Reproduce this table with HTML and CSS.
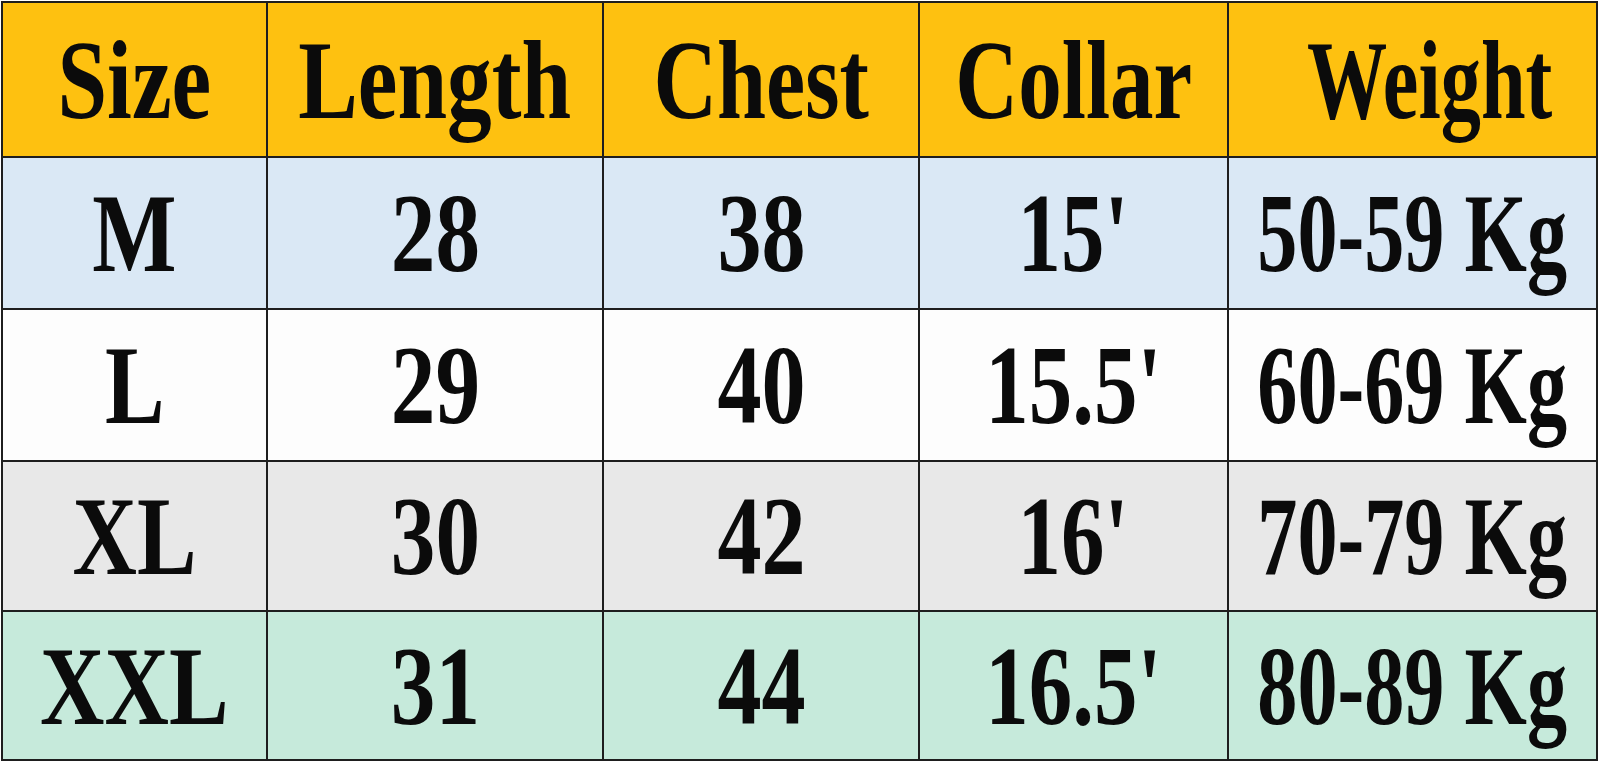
FILE: index.html
```html
<!DOCTYPE html>
<html lang="en">
<head>
<meta charset="utf-8">
<title>Size Chart</title>
<link rel="stylesheet" href="styles.css">
</head>
<body>
<div class="chart">
  <div class="row head">
    <div class="cell c1"><span class="txt">Size</span></div>
    <div class="cell c2"><span class="txt">Length</span></div>
    <div class="cell c3"><span class="txt">Chest</span></div>
    <div class="cell c4"><span class="txt">Collar</span></div>
    <div class="cell c5 shift"><span class="txt">Weight</span></div>
  </div>
  <div class="row r-m">
    <div class="cell c1"><span class="txt">M</span></div>
    <div class="cell c2"><span class="txt">28</span></div>
    <div class="cell c3"><span class="txt">38</span></div>
    <div class="cell c4"><span class="txt">15'</span></div>
    <div class="cell c5"><span class="txt">50-59 Kg</span></div>
  </div>
  <div class="row r-l">
    <div class="cell c1"><span class="txt">L</span></div>
    <div class="cell c2"><span class="txt">29</span></div>
    <div class="cell c3"><span class="txt">40</span></div>
    <div class="cell c4"><span class="txt">15.5'</span></div>
    <div class="cell c5"><span class="txt">60-69 Kg</span></div>
  </div>
  <div class="row r-xl">
    <div class="cell c1"><span class="txt">XL</span></div>
    <div class="cell c2"><span class="txt">30</span></div>
    <div class="cell c3"><span class="txt">42</span></div>
    <div class="cell c4"><span class="txt">16'</span></div>
    <div class="cell c5"><span class="txt">70-79 Kg</span></div>
  </div>
  <div class="row r-xxl">
    <div class="cell c1"><span class="txt">XXL</span></div>
    <div class="cell c2"><span class="txt">31</span></div>
    <div class="cell c3"><span class="txt">44</span></div>
    <div class="cell c4"><span class="txt">16.5'</span></div>
    <div class="cell c5"><span class="txt">80-89 Kg</span></div>
  </div>
</div>
</body>
</html>
```

FILE: styles.css
```css
html, body {
  margin: 0;
  padding: 0;
  background: #ffffff;
}

body {
  padding: 1px 0 0 1px;
  font-family: "Liberation Serif", "Times New Roman", serif;
}

.chart {
  width: 1595px;
  border-left: 2px solid #1e1e1e;
  border-top: 2px solid #1e1e1e;
  display: flex;
  flex-direction: column;
}

.row {
  display: grid;
  grid-template-columns: 265px 336px 316px 309px 369px;
  height: 152px;
}

.row.head { height: 155px; background: #fec110; }
.row.r-m { background: #dae8f5; }
.row.r-l { background: #fdfdfd; }
.row.r-xl { height: 150px; background: #e8e8e8; }
.row.r-xxl { height: 149px; background: #c6eadb; }

.cell {
  border-right: 2px solid #1e1e1e;
  border-bottom: 2px solid #1e1e1e;
  display: flex;
  align-items: center;
  justify-content: center;
  overflow: hidden;
}

.cell.shift {
  padding-left: 34px;
}

.txt {
  display: inline-block;
  font-size: 113px;
  font-weight: 700;
  line-height: 1.107;
  color: #0b0b0b;
  white-space: nowrap;
  transform: scaleX(0.78);
  transform-origin: center center;
}

.c1 .txt { transform: scaleX(0.79); }
.c2 .txt { transform: scaleX(0.79); }
.c3 .txt { transform: scaleX(0.78); }
.c4 .txt { transform: scaleX(0.77); }
.c5 .txt { transform: scaleX(0.71); }
```
